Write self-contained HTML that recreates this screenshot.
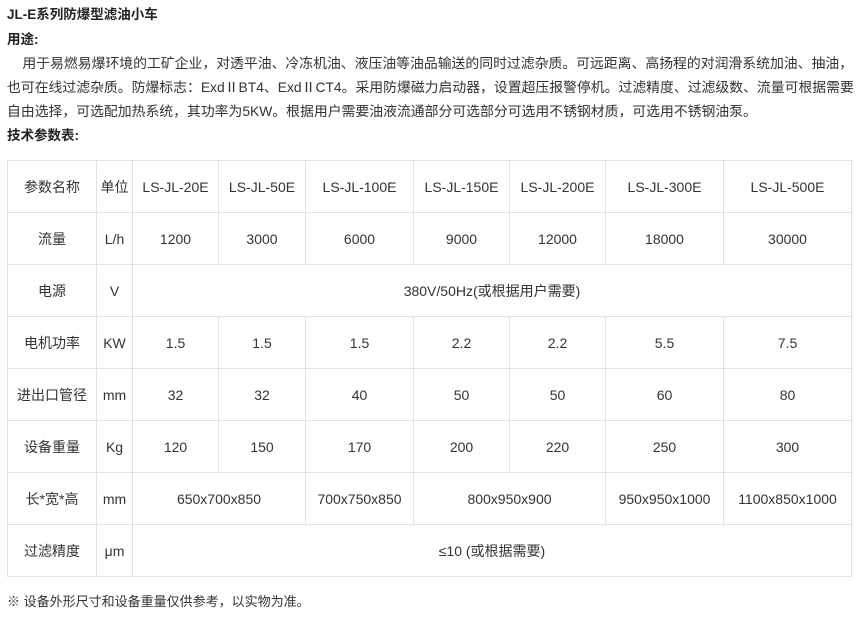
<!DOCTYPE html>
<html><head><meta charset="utf-8"><style>
html,body{margin:0;padding:0;background:#fff;width:860px;height:621px;overflow:hidden}
body{font-family:"Liberation Sans","Noto Sans CJK SC",sans-serif;font-size:14px;color:#333;position:relative}
.t{position:absolute;left:7px;white-space:nowrap;line-height:24px}
b{font-weight:bold;color:#222}
table{position:absolute;left:7px;top:160px;border-collapse:collapse;table-layout:fixed;width:844px}
td{border:1.5px solid #e2e2e2;height:51px;text-align:center;padding:0;font-size:14px;color:#333;white-space:nowrap}
</style></head><body>
<div class="t" style="top:3px;font-size:13.5px"><b>JL-E系列防爆型滤油小车</b></div>
<div class="t" style="top:28px;font-size:13.5px"><b>用途:</b></div>
<div class="t" style="top:51px;font-size:13.85px">&nbsp;&nbsp;&nbsp;&nbsp;用于易燃易爆环境的工矿企业，对透平油、冷冻机油、液压油等油品输送的同时过滤杂质。可远距离、高扬程的对润滑系统加油、抽油，<br>也可在线过滤杂质。防爆标志：ExdⅡBT4、ExdⅡCT4。采用防爆磁力启动器，设置超压报警停机。过滤精度、过滤级数、流量可根据需要<br>自由选择，可选配加热系统，其功率为5KW。根据用户需要油液流通部分可选部分可选用不锈钢材质，可选用不锈钢油泵。</div>
<div class="t" style="top:124px;font-size:13.5px"><b>技术参数表:</b></div>
<table>
<colgroup><col style="width:89px"><col style="width:36px"><col style="width:86px"><col style="width:87px"><col style="width:108px"><col style="width:96px"><col style="width:96px"><col style="width:118px"><col style="width:128px"></colgroup>
<tr><td>参数名称</td><td>单位</td><td>LS-JL-20E</td><td>LS-JL-50E</td><td>LS-JL-100E</td><td>LS-JL-150E</td><td>LS-JL-200E</td><td>LS-JL-300E</td><td>LS-JL-500E</td></tr>
<tr><td>流量</td><td>L/h</td><td>1200</td><td>3000</td><td>6000</td><td>9000</td><td>12000</td><td>18000</td><td>30000</td></tr>
<tr><td>电源</td><td>V</td><td colspan="7">380V/50Hz(或根据用户需要)</td></tr>
<tr><td>电机功率</td><td>KW</td><td>1.5</td><td>1.5</td><td>1.5</td><td>2.2</td><td>2.2</td><td>5.5</td><td>7.5</td></tr>
<tr><td>进出口管径</td><td>mm</td><td>32</td><td>32</td><td>40</td><td>50</td><td>50</td><td>60</td><td>80</td></tr>
<tr><td>设备重量</td><td>Kg</td><td>120</td><td>150</td><td>170</td><td>200</td><td>220</td><td>250</td><td>300</td></tr>
<tr><td>长*宽*高</td><td>mm</td><td colspan="2">650x700x850</td><td>700x750x850</td><td colspan="2">800x950x900</td><td>950x950x1000</td><td>1100x850x1000</td></tr>
<tr><td>过滤精度</td><td>μm</td><td colspan="7">≤10 (或根据需要)</td></tr>
</table>
<div class="t" style="top:590px;font-size:13px">※ 设备外形尺寸和设备重量仅供参考，以实物为准。</div>
</body></html>
